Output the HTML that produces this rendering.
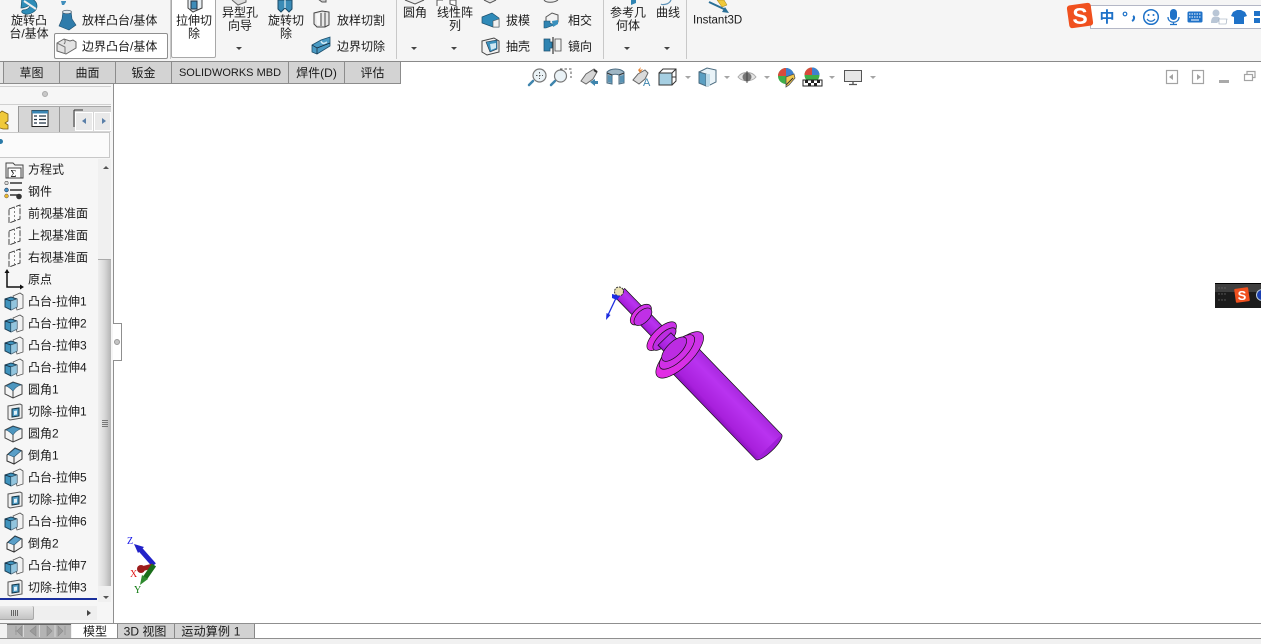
<!DOCTYPE html>
<html lang="zh"><head><meta charset="utf-8"><title>SOLIDWORKS</title>
<style>
html,body{margin:0;padding:0;background:#fff}
#p{position:relative;width:1261px;height:644px;overflow:hidden;background:#fff;font-family:"Liberation Sans","Noto Sans CJK SC",sans-serif;font-size:12px;color:#1a1a1a}
.a{position:absolute}
.t{position:absolute;white-space:nowrap;line-height:13px;transform:translateY(-5.5px)}
.c{position:absolute;white-space:nowrap;line-height:13px;text-align:center;width:80px;margin-left:-40px;transform:translateY(-5.5px)}
.tab{position:absolute;top:62px;height:21px;line-height:23px;text-align:center;background:#d3d3d3;border-left:1px solid #8c8c8c;box-sizing:border-box}
.dn{position:absolute;width:0;height:0;border-left:3px solid transparent;border-right:3px solid transparent;border-top:3px solid #444}
.dg{position:absolute;width:0;height:0;border-left:3px solid transparent;border-right:3px solid transparent;border-top:3px solid #a5a5a5}
svg.full{position:absolute;left:0;top:0}
</style></head><body><div id="p">

<!-- toolbar -->
<div class="a" style="left:0;top:0;width:1261px;height:61px;background:#f5f5f5"></div>
<div class="a" style="left:0;top:61px;width:1261px;height:1px;background:#8a8a8a"></div>
<div class="a" style="left:170px;top:0;width:1px;height:59px;background:#c8c8c8"></div>
<div class="a" style="left:396px;top:0;width:1px;height:59px;background:#c8c8c8"></div>
<div class="a" style="left:603px;top:0;width:1px;height:59px;background:#c8c8c8"></div>
<div class="a" style="left:686px;top:0;width:1px;height:59px;background:#c8c8c8"></div>
<div class="a" style="left:171px;top:-2px;width:45px;height:60px;background:#fff;border:1px solid #a8a8a8;box-sizing:border-box;border-radius:2px"></div>
<div class="a" style="left:54px;top:33px;width:114px;height:26px;background:#fff;border:1px solid #8f8f8f;box-sizing:border-box;border-radius:2px"></div>

<div class="c" style="left:29px;top:20px">旋转凸</div><div class="c" style="left:29px;top:33px">台/基体</div>
<div class="t" style="left:82px;top:20px">放样凸台/基体</div>
<div class="t" style="left:82px;top:46px">边界凸台/基体</div>
<div class="c" style="left:194px;top:20px">拉伸切</div><div class="c" style="left:194px;top:33px">除</div>
<div class="c" style="left:240px;top:12px">异型孔</div><div class="c" style="left:240px;top:25px">向导</div>
<div class="c" style="left:286px;top:20px">旋转切</div><div class="c" style="left:286px;top:33px">除</div>
<div class="t" style="left:337px;top:20px">放样切割</div>
<div class="t" style="left:337px;top:46px">边界切除</div>
<div class="c" style="left:415px;top:12px">圆角</div>
<div class="c" style="left:455px;top:12px">线性阵</div><div class="c" style="left:455px;top:25px">列</div>
<div class="t" style="left:506px;top:20px">拔模</div>
<div class="t" style="left:506px;top:46px">抽壳</div>
<div class="t" style="left:568px;top:20px">相交</div>
<div class="t" style="left:568px;top:46px">镜向</div>
<div class="c" style="left:628px;top:12px">参考几</div><div class="c" style="left:628px;top:25px">何体</div>
<div class="c" style="left:668px;top:12px">曲线</div>
<div class="t" style="left:693px;top:20px;font-size:11.5px">Instant3D</div>

<div class="dn" style="left:236px;top:47px"></div>
<div class="dn" style="left:411px;top:47px"></div>
<div class="dn" style="left:451px;top:47px"></div>
<div class="dn" style="left:624px;top:47px"></div>
<div class="dn" style="left:664px;top:47px"></div>
<div class="dg" style="left:685px;top:76px"></div>
<div class="dg" style="left:724px;top:76px"></div>
<div class="dg" style="left:764px;top:76px"></div>
<div class="dg" style="left:829px;top:76px"></div>
<div class="dg" style="left:870px;top:76px"></div>

<!-- command tabs -->
<div class="tab" style="left:3px;width:56px">草图</div>
<div class="tab" style="left:59px;width:56px">曲面</div>
<div class="tab" style="left:115px;width:56px">钣金</div>
<div class="tab" style="left:171px;width:117px;font-size:11px">SOLIDWORKS MBD</div>
<div class="tab" style="left:288px;width:56px">焊件(D)</div>
<div class="tab" style="left:344px;width:57px;border-right:1px solid #8c8c8c">评估</div>
<div class="a" style="left:0;top:62px;width:3px;height:21px;background:#e4e4e4"></div>
<div class="a" style="left:0;top:83px;width:401px;height:1px;background:#8c8c8c"></div>

<!-- left panel -->
<div class="a" style="left:0;top:84px;width:113px;height:539px;background:#f6f6f6"></div>
<div class="a" style="left:113px;top:84px;width:1px;height:239px;background:#8f8f8f"></div>
<div class="a" style="left:113px;top:361px;width:1px;height:262px;background:#8f8f8f"></div>
<div class="a" style="left:113px;top:323px;width:9px;height:38px;background:#fff;border:1px solid #8f8f8f;border-left:0;box-sizing:border-box"></div>
<div class="a" style="left:114px;top:339px;width:6px;height:6px;border-radius:50%;background:#c4c4c4;border:1px solid #999;box-sizing:border-box"></div>
<div class="a" style="left:0;top:86px;width:111px;height:1px;background:#d0d0d0"></div>
<div class="a" style="left:0;top:104px;width:111px;height:1px;background:#d0d0d0"></div>
<div class="a" style="left:42px;top:91px;width:6px;height:6px;border-radius:50%;background:#c8c8c8;border:1px solid #aaa;box-sizing:border-box"></div>
<div class="a" style="left:0;top:106px;width:111px;height:26px;background:#d6d6d6;border-top:1px solid #a8a8a8;box-sizing:border-box"></div>
<div class="a" style="left:0;top:106px;width:19px;height:27px;background:#f6f6f6;border-right:1px solid #999;box-sizing:border-box"></div>
<div class="a" style="left:59px;top:107px;width:1px;height:25px;background:#999"></div>
<div class="a" style="left:75px;top:112px;width:18px;height:19px;background:#e9e9e9;border:1px solid #fff;box-sizing:border-box"></div>
<div class="a" style="left:94px;top:112px;width:17px;height:19px;background:#e9e9e9;border:1px solid #fff;box-sizing:border-box"></div>
<div class="a" style="left:82px;top:118px;width:0;height:0;border-top:3px solid transparent;border-bottom:3px solid transparent;border-right:4px solid #5a7fa8"></div>
<div class="a" style="left:102px;top:118px;width:0;height:0;border-top:3px solid transparent;border-bottom:3px solid transparent;border-left:4px solid #5a7fa8"></div>
<div class="a" style="left:-1px;top:132px;width:111px;height:26px;background:#fbfbfb;border:1px solid #c8c8c8;box-sizing:border-box"></div>
<div class="a" style="left:-2px;top:139px;width:5px;height:5px;border-radius:50%;background:#2a7aa8"></div>

<!-- tree text -->
<div class="t" style="left:28px;top:169px">方程式</div>
<div class="t" style="left:28px;top:191px">钢件</div>
<div class="t" style="left:28px;top:213px">前视基准面</div>
<div class="t" style="left:28px;top:235px">上视基准面</div>
<div class="t" style="left:28px;top:257px">右视基准面</div>
<div class="t" style="left:28px;top:279px">原点</div>
<div class="t" style="left:28px;top:301px">凸台-拉伸1</div>
<div class="t" style="left:28px;top:323px">凸台-拉伸2</div>
<div class="t" style="left:28px;top:345px">凸台-拉伸3</div>
<div class="t" style="left:28px;top:367px">凸台-拉伸4</div>
<div class="t" style="left:28px;top:389px">圆角1</div>
<div class="t" style="left:28px;top:411px">切除-拉伸1</div>
<div class="t" style="left:28px;top:433px">圆角2</div>
<div class="t" style="left:28px;top:455px">倒角1</div>
<div class="t" style="left:28px;top:477px">凸台-拉伸5</div>
<div class="t" style="left:28px;top:499px">切除-拉伸2</div>
<div class="t" style="left:28px;top:521px">凸台-拉伸6</div>
<div class="t" style="left:28px;top:543px">倒角2</div>
<div class="t" style="left:28px;top:565px">凸台-拉伸7</div>
<div class="t" style="left:28px;top:587px">切除-拉伸3</div>

<div class="a" style="left:0;top:598px;width:97px;height:2px;background:#1a2f9c"></div>

<!-- scrollbars -->
<div class="a" style="left:98px;top:159px;width:13px;height:443px;background:#f0f0f0"></div>
<div class="a" style="left:98px;top:259px;width:13px;height:327px;background:linear-gradient(90deg,#eee,#d9d9d9 50%,#b4b4b4);border-top:1px solid #aaa;box-sizing:border-box"></div>
<div class="a" style="left:102px;top:420px;width:6px;height:1px;background:#777;box-shadow:0 2px 0 #777,0 4px 0 #777,0 6px 0 #777"></div>
<div class="a" style="left:103px;top:166px;width:0;height:0;border-left:3px solid transparent;border-right:3px solid transparent;border-bottom:3px solid #555"></div>
<div class="a" style="left:103px;top:596px;width:0;height:0;border-left:3px solid transparent;border-right:3px solid transparent;border-top:3px solid #555"></div>
<div class="a" style="left:0;top:606px;width:97px;height:14px;background:#efefef"></div>
<div class="a" style="left:0;top:606px;width:34px;height:14px;background:linear-gradient(#e9e9e9,#c4c4c4);border-right:1px solid #aaa;border-bottom:1px solid #aaa;box-sizing:border-box;border-radius:0 2px 2px 0"></div>
<div class="a" style="left:11px;top:610px;width:1px;height:6px;background:#666;box-shadow:2px 0 0 #666,4px 0 0 #666,6px 0 0 #666"></div>
<div class="a" style="left:87px;top:610px;width:0;height:0;border-top:3px solid transparent;border-bottom:3px solid transparent;border-left:4px solid #444"></div>

<!-- bottom tabs -->
<div class="a" style="left:0;top:623px;width:1261px;height:1px;background:#8f8f8f"></div>
<div class="a" style="left:0;top:638px;width:1261px;height:6px;background:#f1f1f1;border-top:1px solid #8f8f8f;box-sizing:border-box"></div>
<div class="a" style="left:0;top:624px;width:72px;height:14px;background:#f2f2f2"></div>
<div class="a" style="left:7px;top:624px;width:64px;height:14px;background:#b4b4b4;border-top:1px solid #666;box-sizing:border-box"></div>
<div class="a" style="left:118px;top:624px;width:136px;height:14px;background:#d2d2d2"></div>
<div class="a" style="left:117px;top:624px;width:1px;height:14px;background:#888"></div>
<div class="a" style="left:174px;top:624px;width:1px;height:14px;background:#888"></div>
<div class="a" style="left:254px;top:624px;width:1px;height:14px;background:#888"></div>
<div class="c" style="left:95px;top:631px">模型</div>
<div class="c" style="left:145px;top:631px">3D 视图</div>
<div class="c" style="left:211px;top:631px;letter-spacing:.2px">运动算例 1</div>

<svg class="full" width="1261" height="644" viewBox="0 0 1261 644">
<defs>
<linearGradient id="cy" x1="0" y1="0" x2="0" y2="1"><stop offset="0" stop-color="#a828de"/><stop offset=".3" stop-color="#b933f0"/><stop offset=".85" stop-color="#a820dc"/><stop offset="1" stop-color="#8c12c0"/></linearGradient>
<linearGradient id="fl" x1="0" y1="0" x2="0" y2="1"><stop offset="0" stop-color="#c834e8"/><stop offset="1" stop-color="#e42ce4"/></linearGradient>
<symbol id="boss" viewBox="0 0 20 20" overflow="visible">
<path d="M9 4l7-3 3 2v13l-6 2z" fill="#f2f2f2" stroke="#555" stroke-width=".8"/>
<path d="M1 7l6-2 6 2v8l-6 3-6-3z" fill="#3f93bd" stroke="#1d3f55"/>
<path d="M1 7l6 2 6-2M7 9v9" fill="none" stroke="#123" stroke-width=".8"/>
<path d="M7 9l6-2v8l-6 3z" fill="#bfe0ef" opacity=".65"/>
</symbol>
<symbol id="fil" viewBox="0 0 20 20" overflow="visible">
<path d="M1 6l8-4 9 3v9l-9 4-8-4z" fill="#f4f4f4" stroke="#444"/>
<path d="M2 6l7-3.5 8 2.5c-4 1-6 3-8 6C7 9 5 7 2 6z" fill="#4d96bf" stroke="#24506b" stroke-width=".6"/>
<path d="M9 11v7" stroke="#444" fill="none"/>
</symbol>
<symbol id="cut" viewBox="0 0 20 20" overflow="visible">
<path d="M3 4l12-2 2 1v13l-12 2-2-1z" fill="#efefef" stroke="#555"/>
<path d="M7 7l7-1v8l-7 1z" fill="#4e9bc4" stroke="#134" stroke-width="1"/>
<path d="M9 9l3-.5v4l-3 .5z" fill="#dff0f8"/>
</symbol>
<symbol id="cham" viewBox="0 0 20 20" overflow="visible">
<path d="M2 9l8-7 7 3v8l-8 5-7-3z" fill="#f4f4f4" stroke="#333"/>
<path d="M3 8.500l7-6 6 2.500-7 6z" fill="#5a9fc8" stroke="#24506b" stroke-width=".6"/>
<path d="M9 11v7" stroke="#333" fill="none"/>
</symbol>
<symbol id="pln" viewBox="0 0 20 20" overflow="visible">
<path d="M4 5l11-4v14L4 19z" fill="#fafafa" stroke="#333" stroke-width=".9" stroke-dasharray="6 1.500"/>
<path d="M9.500 3v15" stroke="#666" stroke-width=".8" stroke-dasharray="2 2"/>
</symbol>
</defs>

<!-- tree icons -->
<g>
<path d="M6 163h7l2 2h8v13H6z" fill="#f5f5f5" stroke="#444"/><path d="M8 168h13v10H8z" fill="#fff" stroke="#444"/>
<text x="10.500" y="177" font-size="10" font-family="Liberation Serif,serif" fill="#111">Σ</text>
<circle cx="6.500" cy="183" r="1.700" fill="#ddd" stroke="#555" stroke-width=".6"/><circle cx="6.500" cy="190" r="1.900" fill="#3f8fc4" stroke="#235"  stroke-width=".6"/><circle cx="6.500" cy="196" r="1.900" fill="#eab92b" stroke="#765" stroke-width=".6"/>
<path d="M10 183h12M10 190h12M10 195h8" stroke="#333" stroke-width="1.500"/><circle cx="19" cy="196.500" r="2.800" fill="#333"/>
<use href="#pln" x="5" y="204" width="20" height="20"/><use href="#pln" x="5" y="226" width="20" height="20"/><use href="#pln" x="5" y="248" width="20" height="20"/>
<path d="M7 272v15h14" fill="none" stroke="#111" stroke-width="1.500"/><path d="M7 269l-2.500 4h5zM24 287l-4-2.500v5z" fill="#111"/>
<use href="#boss" x="4" y="292" width="20" height="20"/><use href="#boss" x="4" y="314" width="20" height="20"/><use href="#boss" x="4" y="336" width="20" height="20"/><use href="#boss" x="4" y="358" width="20" height="20"/>
<use href="#fil" x="4" y="380" width="20" height="20"/><use href="#cut" x="5" y="402" width="20" height="20"/><use href="#fil" x="4" y="424" width="20" height="20"/><use href="#cham" x="5" y="446" width="20" height="20"/>
<use href="#boss" x="4" y="468" width="20" height="20"/><use href="#cut" x="5" y="490" width="20" height="20"/><use href="#boss" x="4" y="512" width="20" height="20"/><use href="#cham" x="5" y="534" width="20" height="20"/>
<use href="#boss" x="4" y="556" width="20" height="20"/><use href="#cut" x="5" y="578" width="20" height="20"/>
</g>

<!-- panel tabs icons -->
<path d="M-3 115l5-4 6 3v7l-3 2 3 2v4l-5 0-6-2z" fill="#f0c93a" stroke="#7a5c10" stroke-width=".8"/>
<rect x="32" y="110.500" width="16" height="16" fill="#fff" stroke="#222"/><rect x="32" y="110.500" width="16" height="3" fill="#3a86b4"/>
<path d="M34 116h3M34 119.500h3M34 123h3M39 116h7M39 119.500h7M39 123h7" stroke="#234" stroke-width="1.200"/>
<path d="M74 110h9M74 110v17" stroke="#333" fill="none"/>

<!-- bottom nav -->
<g fill="#9c9c9c" stroke="#8a8a8a" stroke-width=".6">
<path d="M21 631l-6 0M16 626v9" fill="none"/><path d="M22 626l-5 5 5 5zM36 626l-6 5 6 5zM47 626l5 5-5 5zM58 626l5 5-5 5z"/><path d="M65 626v9" fill="none"/>
</g>
<path d="M23.500 625v12M39.500 625v12M55 625v12" stroke="#d8d8d8"/>

<!-- ribbon icons -->
<path d="M22 -3c6 0 15 2 15 9 0 6-8 9-12 8-4-1-4-3-2-4 4 0 7-2 7-5-2 1-5 3-9 3z" fill="#2e8db8" stroke="#1b5673" stroke-width=".7"/><path d="M24 1l12 8" stroke="#eee" stroke-width="2"/>
<path d="M61 1h5v1l-2 3h-2z" fill="#3f8ebc"/>
<path d="M63 11h8l1 8 4 6-7 5-10-4 3-7z" fill="#2f7cab" stroke="#1d4f70" stroke-width=".6"/><ellipse cx="67" cy="12" rx="4.500" ry="1.800" fill="#dfe9ef" stroke="#345" stroke-width=".6"/>
<path d="M57 43l7-4 6 2 3-1 3 2v6l-10 6-9-3z" fill="#e3e3e3" stroke="#666"/><path d="M64 39c2 2 1 4 0 5M57 43l8 4v7" fill="none" stroke="#777"/>
<path d="M188 0v8l5 4 9-4V-2h-12z" fill="#e8eef2" stroke="#444"/><path d="M191 1h6v8h-6z" fill="#3d8bb8" stroke="#234"/>
<path d="M232 0l6 5 8-3v-3" fill="#ddd" stroke="#666"/>
<path d="M278 0v9l3 3 4-4 4 4 3-3V0z" fill="#3a8bb6" stroke="#1b4a66"/><path d="M285 0v8" stroke="#fff"/>
<path d="M318 -1l4 3h4v-4" fill="#cfcfcf" stroke="#555"/>
<path d="M314 13l8-2 7 1v13l-4 2h-8l-3-3z" fill="#e8e8e8" stroke="#444"/><path d="M321 13v13M325 12.500v14" stroke="#444"/><path d="M316 14l4-1v12h-3z" fill="#f8f8f8"/>
<path d="M312 45l9-5 3-1 6-2 0 9-13 8-5-2z" fill="#4a9ac3" stroke="#1c4f6d" stroke-width=".8"/><path d="M312 45l5 3v6M317 48l13-5" stroke="#123" fill="none" stroke-width=".7"/><path d="M321 41c1 3 3 3 6 1" stroke="#cfe7f3" fill="none" stroke-width="1.500"/>
<path d="M405 0l10 4 9-4" fill="#ededed" stroke="#555"/>
<path d="M437 6V0h6M450 4V0h6v6z" fill="#fff" stroke="#555"/>
<path d="M484 0l6 3 6-3" fill="#e6e6e6" stroke="#555"/>
<path d="M482 17l10-4 7 5v9h-6l-11-4z" fill="#2f8ab8" stroke="#1c4f6d" stroke-width=".7"/><path d="M493 21l6-2v8h-6z" fill="#f2f2f2" stroke="#555" stroke-width=".6"/>
<path d="M482 41l12-3 5 3v11l-12 3-5-3z" fill="#f2f2f2" stroke="#444"/><path d="M486 42l11-2v9l-7 3z" fill="#3a90bd" stroke="#234" stroke-width=".6"/><path d="M490 44l6-1v5l-5 2z" fill="#cfe7f3"/>
<path d="M544 0c2 3 10 3 14 0" fill="#eee" stroke="#555"/>
<path d="M546 17l6-4 6 2v7l-5 3-7-3z" fill="#f2f2f2" stroke="#555"/><path d="M544 21h6v2l4 2-8 3-2 0z" fill="#2f84b2" stroke="#1c4f6d" stroke-width=".6"/><path d="M552 21l6-1v4l-5 3z" fill="#3a90bd"/>
<path d="M544 39h6v3h2v6h-2v3h-6z" fill="#2f84b2" stroke="#1c4f6d" stroke-width=".7"/><path d="M553 37v17" stroke="#111"/><path d="M561 39h-6v3h-0v6h0v3h6z" fill="#f4f4f4" stroke="#444" stroke-width=".8"/>
<path d="M631 0h5v3l-5 2z" fill="#2f84b2"/>
<path d="M661 4c1 1 8 1 10-4" fill="none" stroke="#5f93b8" stroke-width="1.200"/>
<path d="M717 0l7 0 3 5-5 2z" fill="#f0c93a" stroke="#9a7c1a" stroke-width=".5"/><path d="M709 2l17 8" stroke="#2a6f96" stroke-width="2"/><path d="M729 13l-7-1 3-5z" fill="#2a6f96"/>

<!-- view toolbar -->
<g fill="none">
<path d="M533 81l-4 4" stroke="#3f85ad" stroke-width="2.500" stroke-linecap="round"/><circle cx="539.500" cy="75.500" r="6.500" fill="#eaf2f6" stroke="#777" stroke-width="1.200"/><path d="M539.500 72v7M536 75.500h7" stroke="#555" stroke-dasharray="1.500 1.500"/>
<path d="M555 81l-4 4" stroke="#3f85ad" stroke-width="2.500" stroke-linecap="round"/><circle cx="560.500" cy="76" r="6" fill="#eaf2f6" stroke="#777" stroke-width="1.200"/><path d="M560 69h11v9" stroke="#555" stroke-dasharray="2.500 2"/>
<path d="M581 81l5-7 8-5 3 3-4 7-7 5z" fill="#d6d6d6" stroke="#666"/><path d="M590 82l5-3v2h3v3h-3v2z" fill="#3f85ad"/><path d="M594 70l3 2" stroke="#333" stroke-width="2"/>
<path d="M607 72c4-4 13-4 17 0v11l-5 1V75c-3-1-5-1-7 0v9l-5-1z" fill="#9fb6c4" stroke="#4b6b80"/><path d="M607 73l5 2M624 73l-5 2" stroke="#333"/><path d="M608 75l4 1v7l-4-1zM620 76l4-1v7l-4 1z" fill="#3f85ad" opacity=".7"/>
<path d="M633 80l5-6 7-4 3 3-3 6-6 5z" fill="#dadada" stroke="#666"/><path d="M638 70l3-3-1 3 3-1-3 4z" fill="#e8883a"/><text x="643" y="86" font-size="11" fill="#3f85ad" font-family="Liberation Sans,sans-serif" stroke="none">A</text>
<path d="M659 73l4-4h13v12l-4 4h-13z" fill="#fff" stroke="#333"/><path d="M659 73h13v12h-13z" fill="#a6cfe2" stroke="#333"/><path d="M672 73l4-4M672 77h4" stroke="#333"/>
<path d="M699 72l8-4 9 2v12l-8 4-9-3z" fill="#e9f3f8" stroke="#4c6c80"/><path d="M699 72l7 2v12l-7-3z" fill="#5b9fc2" stroke="#4c6c80"/><path d="M706 74h4v12h-4z" fill="#bddbe9"/>
<path d="M738 77c4-6 14-6 18 0-4 5-14 5-18 0z" fill="#e4e4e4" stroke="#aaa"/><circle cx="747" cy="77" r="4.500" fill="#777"/><path d="M747 71v12" stroke="#333" stroke-width=".8"/>
<circle cx="786" cy="76" r="8" fill="#3fae4a"/><path d="M786 76V68a8 8 0 0 1 8 8z" fill="#3f80d0"/><path d="M786 76l-8 0a8 8 0 0 1 8-8z" fill="#d84a3c"/><path d="M786 77l8-3 1 4-6 7-3 2z" fill="#f3c94c" stroke="#555" stroke-width=".8"/><path d="M786 85l7-7" stroke="#333"/>
<circle cx="812" cy="75" r="7.500" fill="#3fae4a"/><path d="M812 75V67.500a7.500 7.500 0 0 1 7.500 7.500z" fill="#3f80d0"/><path d="M812 75h-7.500a7.500 7.500 0 0 1 7.500-7.500z" fill="#d84a3c"/><path d="M803 80h19v6h-19z" fill="#fff" stroke="#222"/><path d="M805 80h3v3h-3zM811 80h3v3h-3zM817 80h3v3h-3zM808 83h3v3h-3zM814 83h3v3h-3z" fill="#222"/>
<rect x="844.500" y="70.500" width="17" height="11" fill="#e6e6e6" stroke="#555"/><path d="M853 82v2M849 84.500h8" stroke="#555" stroke-width="1.300"/>
</g>

<!-- window buttons -->
<g fill="none" stroke="#a3a3a3" stroke-width="1.200">
<rect x="1166.500" y="70.500" width="11" height="13"/><rect x="1192.500" y="70.500" width="11" height="13"/>
<rect x="1244.500" y="74.500" width="8" height="6"/><path d="M1247 74v-2.500h8v6h-2"/>
</g>
<path d="M1173 74v6l-4-3zM1197 74v6l4-3z" fill="#a3a3a3"/>
<rect x="1219" y="80" width="10" height="3" fill="#a9a9a9"/>

<!-- CAD model -->
<g transform="translate(620 293) rotate(46)" stroke="#111" stroke-width=".7">
<rect x="0" y="-6.500" width="30" height="13" fill="url(#cy)"/>
<rect x="30" y="-7.500" width="32" height="15" fill="url(#cy)"/>
<ellipse cx="30" cy="0" rx="7" ry="13" fill="url(#fl)"/>
<ellipse cx="33" cy="0" rx="6" ry="11" fill="#c030e6"/>
<ellipse cx="214" cy="0" rx="5" ry="18" fill="#a01ed8"/>
<rect x="85" y="-18" width="129" height="36" fill="url(#cy)" stroke="none"/>
<path d="M85-18H214M85 18H214" fill="none"/>
<ellipse cx="60" cy="0" rx="8" ry="19" fill="url(#fl)"/>
<ellipse cx="64" cy="0" rx="6" ry="15" fill="#bc2ce2"/>
<rect x="64" y="-9" width="12" height="18" fill="url(#cy)"/>
<ellipse cx="86" cy="0" rx="12" ry="31" fill="url(#fl)"/>
<ellipse cx="82" cy="0" rx="9" ry="23" fill="#d030e6"/>
<ellipse cx="78" cy="0" rx="7" ry="16" fill="#bc2ce2"/>
</g>
<circle cx="619" cy="291.500" r="4.500" fill="#e8e0b0" stroke="#333" stroke-width="1" stroke-dasharray="2 1"/>
<path d="M617 296l-9 19" stroke="#1c2ce0" stroke-width="1.300"/><path d="M606 320l.5-7 4 2z" fill="#1c2ce0"/><path d="M612 294l8 2-3 4-5-2z" fill="#1c2ce0"/>

<!-- triad -->
<path d="M154 565l-15-17" stroke="#2222c8" stroke-width="5"/><path d="M134 544l10 3-6 6z" fill="#2222c8"/>
<path d="M153 566l-12 3" stroke="#9c1c1c" stroke-width="5"/><circle cx="141" cy="569" r="4" fill="#9c1c1c"/>
<path d="M154 565l-9 13" stroke="#1a6e1a" stroke-width="5"/><path d="M140 585l2-10 6 4z" fill="#2e8a2e"/>
<text x="127" y="544" font-size="10" fill="#1616e8" font-family="Liberation Serif,serif">Z</text>
<text x="130" y="577" font-size="10" fill="#e01616" font-family="Liberation Serif,serif">X</text>
<text x="134" y="593" font-size="10" fill="#0f7a0f" font-family="Liberation Serif,serif">Y</text>
</svg>

<!-- sogou bar -->
<div class="a" style="left:1090px;top:5px;width:180px;height:24px;background:#fff;border:1px solid #b4b7c6;box-sizing:border-box"></div>
<svg class="full" width="1261" height="644" viewBox="0 0 1261 644">
<g>
<rect x="1068" y="4" width="24" height="23" rx="3" fill="#f0501e" transform="rotate(-8 1080 15.500)"/>
<text x="1080" y="24" text-anchor="middle" font-size="23" font-weight="bold" font-family="Liberation Sans,sans-serif" fill="#fff">S</text>
<text x="1107" y="22" text-anchor="middle" font-size="15" font-weight="bold" fill="#1f72c8" font-family="Liberation Sans,Noto Sans CJK SC,sans-serif">中</text>
<circle cx="1125" cy="14" r="1.800" fill="none" stroke="#1f72c8" stroke-width="1.200"/><path d="M1133 16c2 1 1 4-1 5" fill="none" stroke="#1f72c8" stroke-width="2"/>
<circle cx="1151" cy="17" r="7.300" fill="none" stroke="#1f72c8" stroke-width="1.500"/><circle cx="1148.500" cy="15" r="1" fill="#1f72c8"/><circle cx="1153.500" cy="15" r="1" fill="#1f72c8"/><path d="M1147 19c2 3 6 3 8 0" fill="none" stroke="#1f72c8" stroke-width="1.200"/>
<rect x="1170" y="9" width="7" height="11" rx="3.500" fill="#1f72c8"/><path d="M1168 17c0 7 11 7 11 0M1173.500 22v3M1170 24.500h7" fill="none" stroke="#1f72c8" stroke-width="1.300"/>
<rect x="1187.500" y="11.500" width="15" height="11" rx="1.500" fill="#1f72c8"/><path d="M1189 14h12M1189 17h12" stroke="#fff" stroke-dasharray="1.500 1"/><path d="M1191 20h8" stroke="#fff"/>
<circle cx="1216" cy="13" r="3.500" fill="#b9c6d6"/><path d="M1211 23c0-6 3-7 5-6 3-1 4 1 4 3l-3 3z" fill="#b9c6d6"/><path d="M1219 19h8l-1 5h-7z" fill="#fff" stroke="#8fa0b4" stroke-width=".6"/>
<path d="M1233 12l4-2h4l4 2 2 4-3 1v7h-10v-7l-3-1z" fill="#1f72c8"/>
<rect x="1254" y="11" width="6" height="5" fill="#1f72c8"/><rect x="1254" y="18" width="6" height="5" fill="#1f72c8"/>
</g>
<!-- floating sogou -->
<rect x="1215" y="283" width="46" height="25" fill="#1c1c1c"/><rect x="1215" y="283" width="46" height="1" fill="#000"/>
<rect x="1215" y="284" width="46" height="8" fill="#4e4e4e" opacity=".7"/>
<g fill="#666"><circle cx="1219" cy="288" r=".7"/><circle cx="1222" cy="288" r=".7"/><circle cx="1225" cy="288" r=".7"/><circle cx="1219" cy="294" r=".7"/><circle cx="1222" cy="294" r=".7"/><circle cx="1225" cy="294" r=".7"/><circle cx="1219" cy="300" r=".7"/><circle cx="1222" cy="300" r=".7"/><circle cx="1225" cy="300" r=".7"/></g>
<rect x="1235" y="288" width="14" height="14" rx="1" fill="#f0501e" transform="rotate(-8 1242 295)"/>
<text x="1242" y="300" text-anchor="middle" font-size="13" font-weight="bold" font-family="Liberation Sans,sans-serif" fill="#fff">S</text>
<circle cx="1262" cy="295" r="5.500" fill="#1a3fb0" stroke="#bcd" stroke-width="1"/>
</svg>
</div></body></html>
